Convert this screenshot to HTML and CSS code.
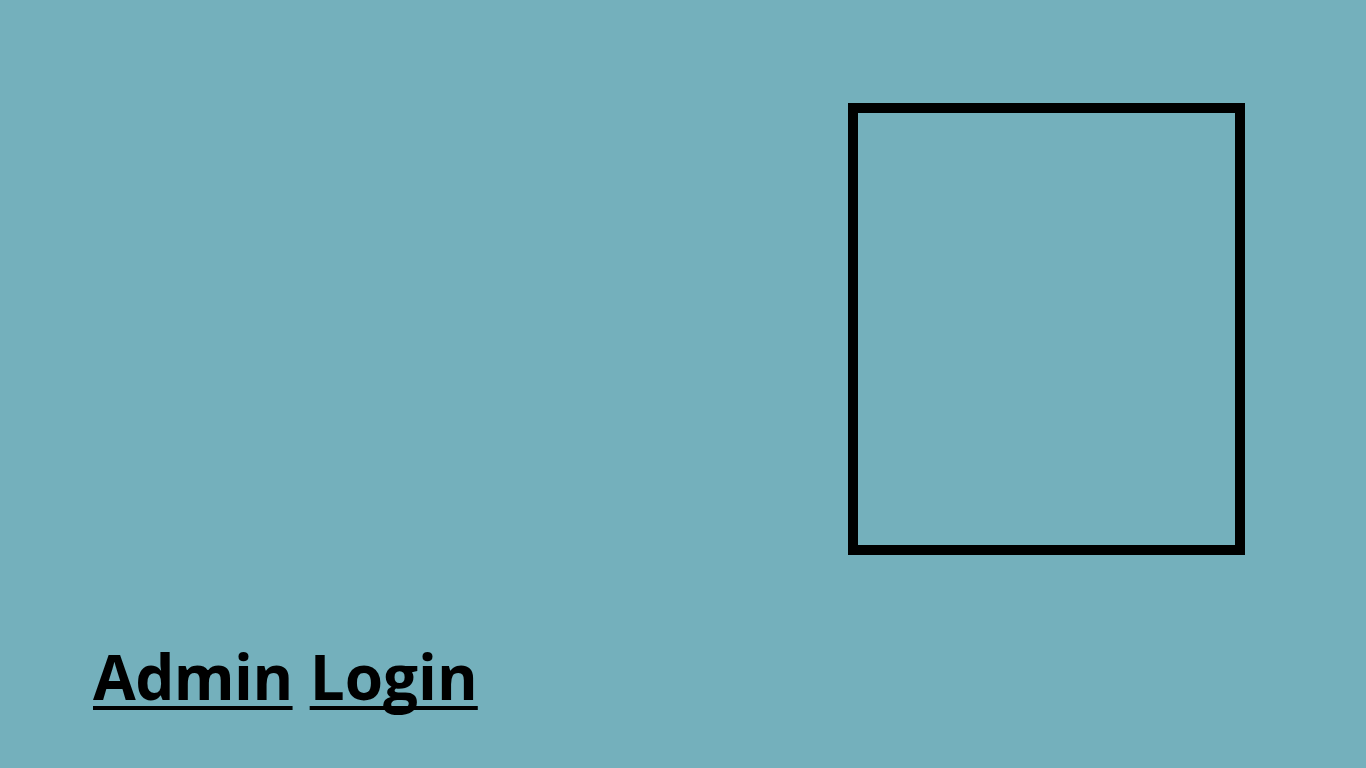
FILE: index.html
```html
<!DOCTYPE html>
<html>
<head>
<meta charset="utf-8">
<title>Admin Login</title>
<link rel="stylesheet" href="styles.css">
</head>
<body>
<div class="page">
  <div class="top">
    <div class="frame"></div>
  </div>
  <h1 class="title"><a class="word word-admin" href="#">Admin</a> <a class="word word-login" href="#">Login</a></h1>
</div>
</body>
</html>
```
FILE: styles.css
```css
html, body {
  margin: 0;
  padding: 0;
  height: 100%;
  background: #74b0bc;
  overflow: hidden;
}
.page {
  display: flex;
  flex-direction: column;
  height: 768px;
  padding-top: 103px;
  box-sizing: border-box;
}
.top {
  display: flex;
  justify-content: flex-end;
  padding-right: 121px;
}
.frame {
  width: 397px;
  height: 452px;
  border: 10px solid #000;
  box-sizing: border-box;
}
.title {
  margin: 86px 0 0 93px;
  font-family: "Open Sans", "Noto Sans", sans-serif;
  font-weight: 700;
  font-size: 62px;
  line-height: 70px;
  color: #000;
}
.word {
  color: #000;
  text-decoration: underline;
  text-decoration-thickness: 4px;
  text-underline-offset: 6px;
  text-decoration-skip-ink: none;
}
.word-admin {
  letter-spacing: -0.6px;
}
.word-login {
  letter-spacing: 0;
  margin-left: 1px;
}
```
